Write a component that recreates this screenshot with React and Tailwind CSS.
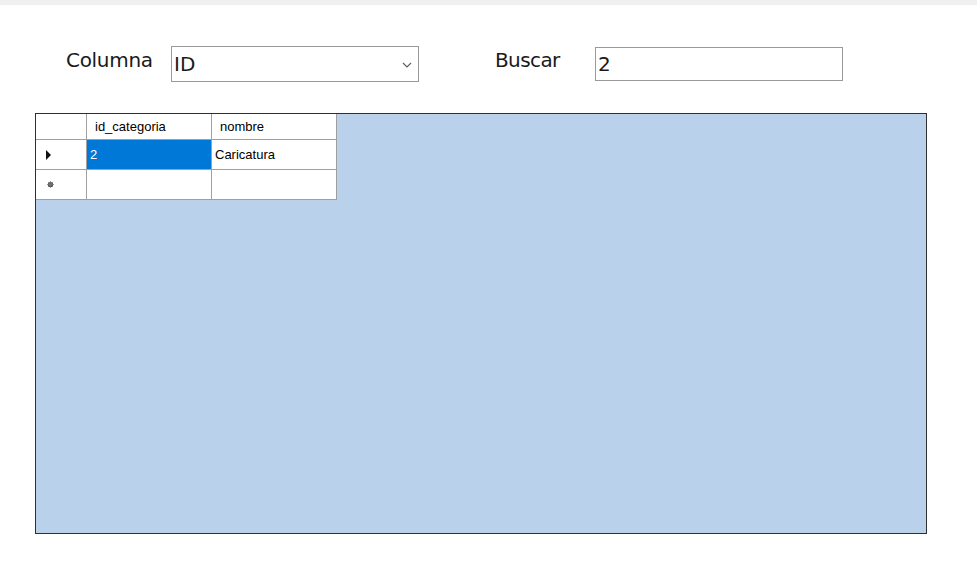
import React from "react";

export default function App() {
  const cell = "border-r border-b border-[#a0a0a0] bg-white";
  return (
    <div className="w-[977px] h-[565px] bg-white overflow-hidden text-[#1a1a1a]" style={{ fontFamily: '"DejaVu Sans", sans-serif' }}>
      <div className="h-[5px] bg-[#f0f0f0]" />
      <div className="flex items-start pt-[41px] pl-[66px]">
        <div className="w-[105px] pt-[2px] text-[20px] leading-[24px] tracking-[-0.3px]">Columna</div>
        <div className="w-[248px] h-[36px] border border-[#9a9a9a] flex items-center pl-[2px] pr-[6px] text-[20px] leading-[24px]">
          <span className="flex-1">ID</span>
          <svg width="10" height="6" viewBox="0 0 10 6" className="mt-[2px]">
            <path d="M1 1 L5 5 L9 1" fill="none" stroke="#606060" strokeWidth="1.2" />
          </svg>
        </div>
        <div className="ml-[76px] w-[100px] pt-[2px] text-[20px] leading-[24px] tracking-[-0.6px]">Buscar</div>
        <div className="w-[248px] h-[34px] mt-[1px] border border-[#9a9a9a] flex items-center pl-[2px] text-[20px] leading-[24px]">
          2
        </div>
      </div>
      <div className="ml-[35px] mt-[31px] w-[892px] h-[421px] border border-[#2f2f2f] bg-[#b9d1ea]">
        <div
          className="grid grid-cols-[51px_125px_125px] grid-rows-[26px_30px_30px] w-max text-[13px] leading-[16px] text-black"
          style={{ fontFamily: '"Liberation Sans", Arial, sans-serif' }}
        >
          <div className={cell} />
          <div className={cell + " flex items-center pl-[8px]"}>id_categoria</div>
          <div className={cell + " flex items-center pl-[8px]"}>nombre</div>

          <div className={cell + " flex items-center pl-[10px]"}>
            <svg width="6" height="10" viewBox="0 0 6 10">
              <path d="M0 0 L5 5 L0 10 Z" fill="#111" />
            </svg>
          </div>
          <div className="border-r border-b border-[#a0a0a0] bg-[#0078d7] text-white flex items-center pl-[3px]">2</div>
          <div className={cell + " flex items-center pl-[3px]"}>Caricatura</div>

          <div className={cell + " flex items-center pl-[11px]"}>
            <svg width="7" height="7" viewBox="0 0 7 7">
              <circle cx="3.5" cy="3.5" r="2.6" fill="#4a4a4a" />
              <path d="M3.5 0 V7 M0 3.5 H7 M1 1 L6 6 M6 1 L1 6" stroke="#777" strokeWidth="0.8" />
            </svg>
          </div>
          <div className={cell} />
          <div className={cell} />
        </div>
      </div>
    </div>
  );
}
